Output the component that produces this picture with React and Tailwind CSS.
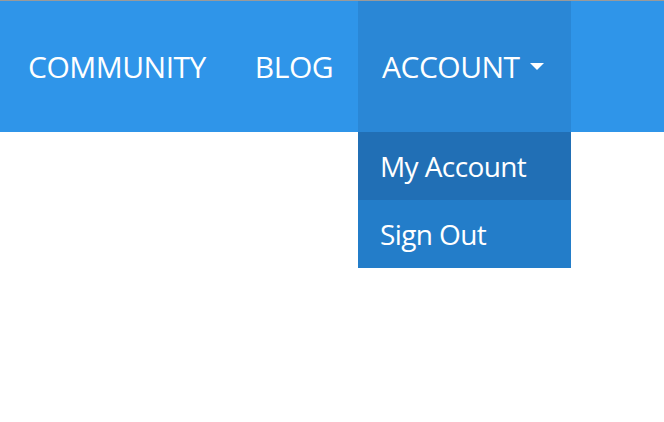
export default function App() {
  const font = { fontFamily: '"Open Sans", "Noto Sans", sans-serif' };

  return (
    <div className="w-[664px] h-[422px] bg-white" style={font}>
      <div className="h-px bg-[#9a9a9a]" />
      <nav className="flex h-[131px] bg-[#2f95e9] pl-[3px] text-white">
        <a className="flex items-center px-[25px] text-[30px] tracking-[-0.5px]">COMMUNITY</a>
        <a className="flex items-center pl-6 pr-[25px] text-[30px] tracking-[-0.5px]">BLOG</a>
        <div className="relative">
          <a className="flex h-full w-[213px] items-center bg-[#2a87d6] pl-6 text-[30px] tracking-[-0.5px]">
            ACCOUNT
            <span className="ml-[10px] h-0 w-0 border-x-[7px] border-t-[7px] border-x-transparent border-t-white" />
          </a>
          <div className="absolute left-0 top-full w-[213px] text-[28px] tracking-[-0.6px]">
            <div className="flex h-[68px] items-center bg-[#216fb5] pl-[22px]">My Account</div>
            <div className="flex h-[68px] items-center bg-[#237dc9] pl-[22px]">Sign Out</div>
          </div>
        </div>
      </nav>
    </div>
  );
}
